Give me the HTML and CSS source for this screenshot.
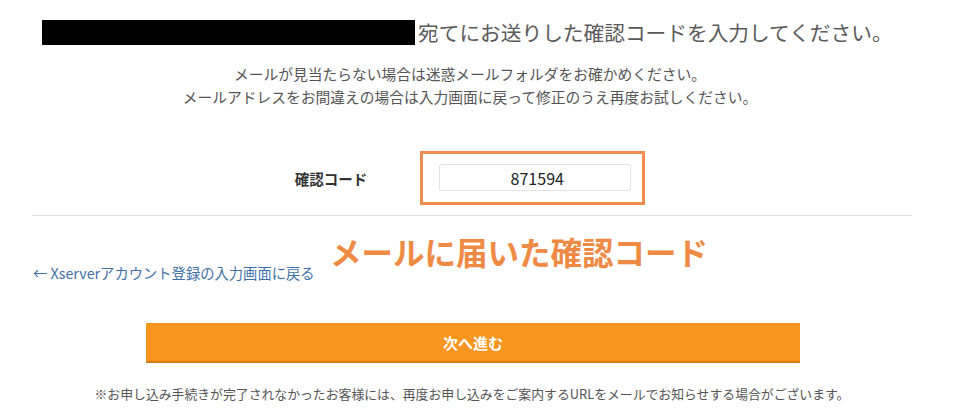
FILE: index.html
```html
<!DOCTYPE html>
<html lang="ja">
<head>
<meta charset="utf-8">
<title>確認コード入力</title>
<link rel="stylesheet" href="styles.css">
</head>
<body>
<div class="page">
  <div class="title-row">
    <span class="redact"></span>
    <span class="title">宛てにお送りした確認コードを入力してください。</span>
  </div>
  <p class="lead">メールが見当たらない場合は迷惑メールフォルダをお確かめください。<br>メールアドレスをお間違えの場合は入力画面に戻って修正のうえ再度お試しください。</p>
  <div class="form-row">
    <label class="label" for="code">確認コード</label>
    <div class="highlight">
      <input id="code" class="code-input" type="text" value="871594">
    </div>
  </div>
  <hr class="divider">
  <div class="back-row">
    <a class="back-link" href="#">← Xserverアカウント登録の入力画面に戻る</a>
    <span class="annotation">メールに届いた確認コード</span>
  </div>
  <button class="next-btn" type="button">次へ進む</button>
  <p class="note">※お申し込み手続きが完了されなかったお客様には、再度お申し込みをご案内するURLをメールでお知らせする場合がございます。</p>
</div>
</body>
</html>
```
FILE: styles.css
```css
html, body {
  margin: 0;
  padding: 0;
  background: #ffffff;
}
body {
  font-family: "Noto Sans CJK JP", "Noto Sans", sans-serif;
  color: #555555;
  width: 960px;
  height: 412px;
  overflow: hidden;
}
.page {
  width: 880px;
  margin-left: 32px;
  display: flex;
  flex-direction: column;
}
.title-row {
  margin-top: 20px;
  display: flex;
  align-items: center;
  justify-content: flex-start;
  height: 25px;
  padding-left: 10px;
}
.redact {
  display: block;
  width: 373px;
  height: 25px;
  background: #000000;
  margin-right: 3px;
}
.title {
  font-size: 20.7px;
  line-height: 25px;
  color: #5a5a5a;
  white-space: nowrap;
}
.lead {
  margin: 17px 0 0;
  text-align: center;
  font-size: 14.75px;
  line-height: 23px;
  color: #555555;
  padding-right: 4px;
}
.form-row {
  margin-top: 43px;
  display: flex;
  align-items: center;
  justify-content: center;
  gap: 53px;
  padding-right: 4px;
}
.label {
  font-size: 14.5px;
  font-weight: bold;
  color: #333333;
  white-space: nowrap;
}
.highlight {
  border: 3px solid #ee8d4f;
  padding: 10px 11px 11px 16px;
  display: flex;
}
.code-input {
  width: 192px;
  height: 27px;
  box-sizing: border-box;
  border: 1px solid #e3e3e3;
  border-radius: 2px;
  background: #ffffff;
  text-align: center;
  font-family: "Noto Sans CJK JP", "Noto Sans", sans-serif;
  font-size: 16px;
  color: #222222;
  padding: 0 0 0 4px;
  outline: none;
}
.divider {
  margin: 10px 0 0;
  border: none;
  border-top: 1px solid #dedede;
  height: 0;
}
.back-row {
  position: relative;
  margin-top: 44px;
  height: 20px;
}
.back-link {
  font-size: 14.3px;
  line-height: 20px;
  color: #4170a8;
  text-decoration: none;
  white-space: nowrap;
  margin-left: 1px;
}
.annotation {
  position: absolute;
  left: 298px;
  top: -27px;
  font-size: 31.5px;
  font-weight: bold;
  line-height: 36px;
  color: #ef8a45;
  white-space: nowrap;
}
.next-btn {
  margin: 43px 0 0 114px;
  width: 654px;
  height: 40px;
  border: none;
  border-bottom: 2px solid #d97c12;
  background: #f7951f;
  color: #ffffff;
  font-family: "Noto Sans CJK JP", "Noto Sans", sans-serif;
  font-size: 15px;
  font-weight: bold;
  cursor: pointer;
  padding: 0;
}
.note {
  margin: 22px 0 0;
  text-align: center;
  font-size: 12.85px;
  line-height: 18px;
  color: #555555;
  white-space: nowrap;
  padding-right: 0;
}
```
